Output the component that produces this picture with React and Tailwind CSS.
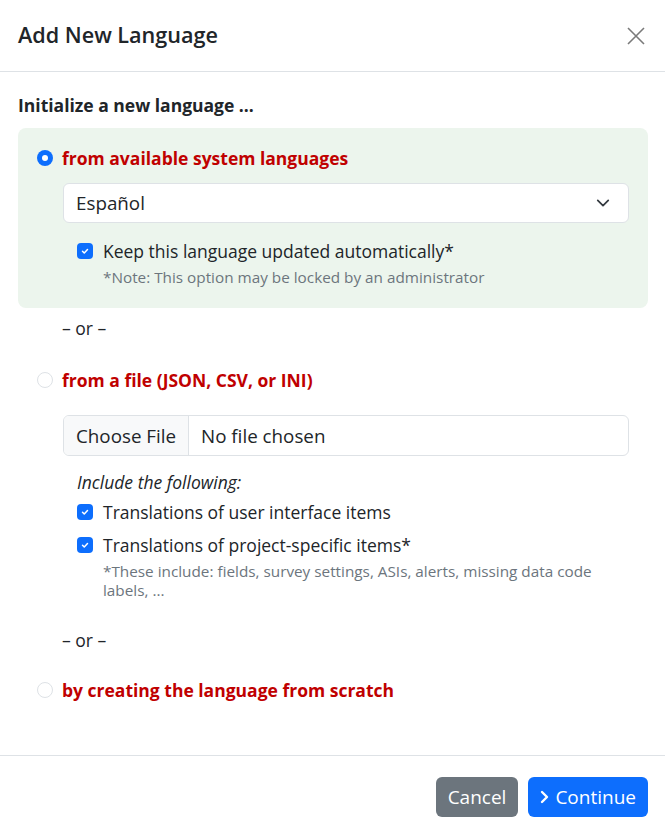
function Radio({ checked }) {
  if (checked) {
    return (
      <span className="w-4 h-4 shrink-0 rounded-full bg-[#0d6efd] flex items-center justify-center">
        <span className="w-[6px] h-[6px] rounded-full bg-white" />
      </span>
    );
  }
  return <span className="w-4 h-4 shrink-0 rounded-full bg-white border border-[#dee2e6]" />;
}

function Check() {
  return (
    <span className="w-4 h-4 shrink-0 rounded-[4px] bg-[#0d6efd] flex items-center justify-center">
      <svg width="10" height="10" viewBox="0 0 20 20" fill="none">
        <path d="M5 10.5l3.5 3.5L15 7" stroke="white" strokeWidth="3" strokeLinecap="round" strokeLinejoin="round" />
      </svg>
    </span>
  );
}

function OptionRow({ checked, children, className = "" }) {
  return (
    <div className={"flex items-center gap-[9px] h-6 " + className}>
      <Radio checked={checked} />
      <span className="font-bold text-[#c00000] whitespace-nowrap">{children}</span>
    </div>
  );
}

function CheckRow({ children, className = "" }) {
  return (
    <div className={"flex items-center gap-[10px] h-6 " + className}>
      <Check />
      <span className="whitespace-nowrap">{children}</span>
    </div>
  );
}

export default function App() {
  return (
    <div className="w-[665px] h-[832px] bg-white text-[#212529] text-[17.5px] leading-6 overflow-hidden" style={{ fontFamily: '"Open Sans", "Liberation Sans", sans-serif' }}>
      {/* Header */}
      <div className="h-[72px] flex items-center justify-between pl-[18px] pr-[17px] border-b border-[#dee2e6]">
        <h1 className="text-[21.6px] leading-[30px] font-semibold -mt-[2px]">Add New Language</h1>
        <svg width="18" height="18" viewBox="0 0 18 18" className="mr-[3px]">
          <path d="M1 1L17 17M17 1L1 17" stroke="#7a7a7a" strokeWidth="1.6" />
        </svg>
      </div>

      {/* Body */}
      <div className="pl-[18px] pr-[17px] pt-[21px] pb-[53px]">
        <div className="h-6 font-bold mb-[11px] whitespace-nowrap">Initialize a new language ...</div>

        <div className="bg-[#ecf5ed] rounded-lg px-[19px] pt-[18px] pb-[20px]">
          <OptionRow checked>from available system languages</OptionRow>
          <div className="ml-[26px] mt-[13px] h-10 bg-white border border-[#dee2e6] rounded-[6px] flex items-center justify-between pl-3 pr-[18px]">
            <span className="text-[18.8px]">Español</span>
            <svg width="14" height="14" viewBox="0 0 16 16" fill="none">
              <path d="M2 5l6 6 6-6" stroke="#343a40" strokeWidth="2" strokeLinecap="round" strokeLinejoin="round" />
            </svg>
          </div>
          <div className="ml-[40px] mt-4">
            <CheckRow>Keep this language updated automatically*</CheckRow>
            <div className="ml-[26px] mt-[3px] text-[15.3px] leading-[22px] text-[#6c757d] whitespace-nowrap">
              *Note: This option may be locked by an administrator
            </div>
          </div>
        </div>

        <div className="ml-[44px] mt-2 h-6">– or –</div>

        <div className="px-[19px]">
          <OptionRow className="mt-7">from a file (JSON, CSV, or INI)</OptionRow>
          <div className="ml-[26px] mt-[23px] h-[41px] border border-[#dee2e6] rounded-[6px] flex overflow-hidden text-[18.8px]">
            <div className="bg-[#f8f9fa] border-r border-[#dee2e6] px-3 flex items-center">Choose File</div>
            <div className="px-3 flex items-center">No file chosen</div>
          </div>
          <div className="ml-[40px]">
            <div className="italic mt-[14px] h-6">Include the following:</div>
            <CheckRow className="mt-[6px]">Translations of user interface items</CheckRow>
            <CheckRow className="mt-[9px]">Translations of project-specific items*</CheckRow>
            <div className="ml-[26px] mt-[5px] text-[15.3px] leading-[19px] text-[#6c757d]">
              *These include: fields, survey settings, ASIs, alerts, missing data code labels, ...
            </div>
          </div>
        </div>

        <div className="ml-[44px] mt-[28px] h-6">– or –</div>

        <div className="px-[19px]">
          <OptionRow className="mt-[26px]">by creating the language from scratch</OptionRow>
        </div>
      </div>

      {/* Footer */}
      <div className="border-t border-[#dee2e6] flex justify-end gap-[10px] pl-4 pr-[17px] pt-[21px]">
        <button className="h-10 px-3 rounded-[6px] bg-[#6c757d] text-white text-[19px]">Cancel</button>
        <button className="h-10 pl-[11px] pr-3 rounded-[6px] bg-[#0d6efd] text-white text-[19px] flex items-center gap-[5px]">
          <svg width="11" height="14" viewBox="0 0 11 14" fill="none">
            <path d="M3 2l5 5-5 5" stroke="white" strokeWidth="2.4" strokeLinecap="round" strokeLinejoin="round" />
          </svg>
          Continue
        </button>
      </div>
    </div>
  );
}
